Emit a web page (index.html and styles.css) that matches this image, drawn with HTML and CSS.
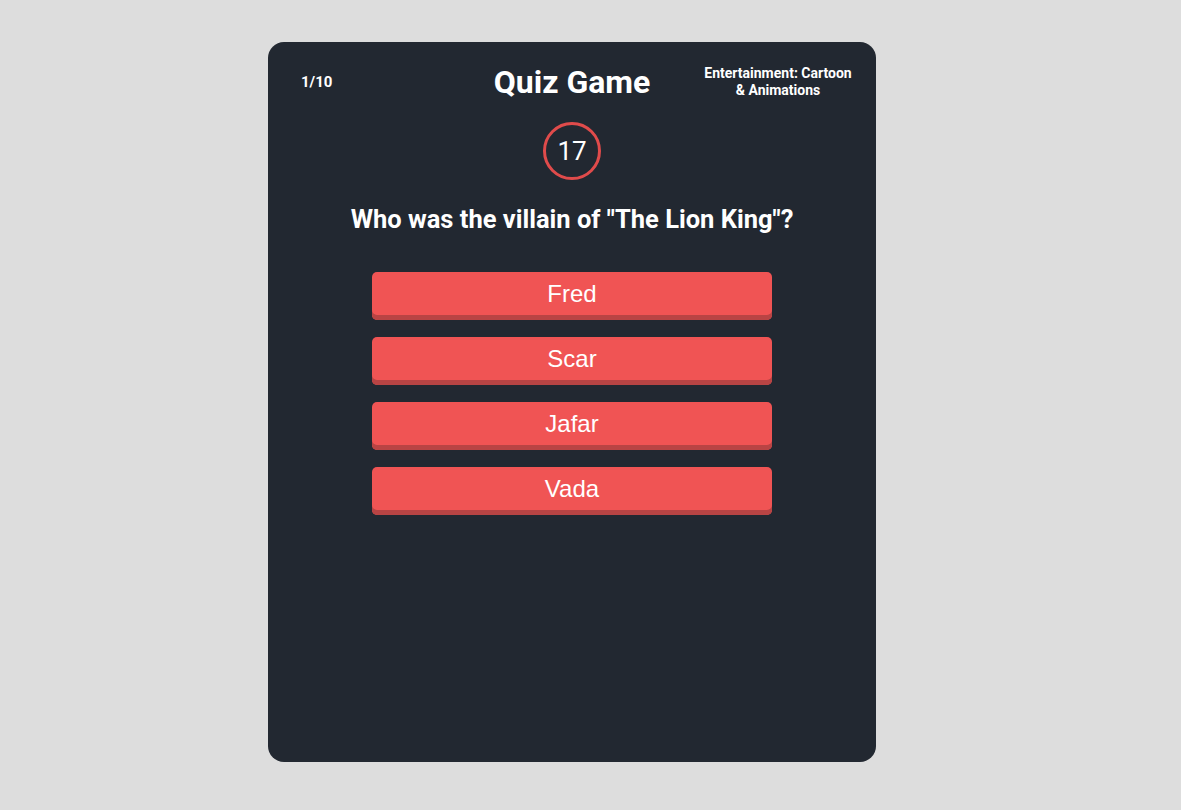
FILE: index.html
```html
<!DOCTYPE html>
<html>
<head>
<meta charset="utf-8">
<link rel="stylesheet" href="styles.css">
</head>
<body>
<main class="card">
  <header class="header">
    <div class="progress">1/10</div>
    <h1 class="title">Quiz Game</h1>
    <div class="category">Entertainment: Cartoon &amp; Animations</div>
  </header>
  <div class="timer">17</div>
  <h2 class="question">Who was the villain of "The Lion King"?</h2>
  <div class="answers">
    <button class="answer">Fred</button>
    <button class="answer">Scar</button>
    <button class="answer">Jafar</button>
    <button class="answer">Vada</button>
  </div>
</main>
</body>
</html>
```
FILE: styles.css
```css
html, body {
  margin: 0;
  padding: 0;
}
body {
  background: #dddddd;
  font-family: Roboto, "Liberation Sans", sans-serif;
  color: #ffffff;
  min-height: 810px;
  display: flex;
  justify-content: flex-start;
  align-items: flex-start;
}
.card {
  box-sizing: border-box;
  width: 608px;
  height: 720px;
  margin-top: 42px;
  margin-left: 268px;
  background: #222831;
  border-radius: 16px;
  display: flex;
  flex-direction: column;
  align-items: center;
  padding-top: 21px;
}
.header {
  width: 100%;
  box-sizing: border-box;
  display: grid;
  grid-template-columns: 1fr auto 1fr;
  align-items: center;
  padding: 0 20px;
}
.progress {
  font-weight: 700;
  font-size: 15px;
  justify-self: start;
  margin-left: 13px;
  margin-top: 0;
}
.title {
  margin: 0;
  font-size: 32px;
  font-weight: 700;
  line-height: 38px;
}
.category {
  justify-self: end;
  width: 156px;
  text-align: center;
  font-weight: 700;
  font-size: 14px;
  line-height: 17px;
  margin-top: 0;
}
.timer {
  box-sizing: border-box;
  width: 58px;
  height: 58px;
  border: 3px solid #e04b4b;
  border-radius: 50%;
  display: flex;
  align-items: center;
  justify-content: center;
  font-size: 26px;
  margin-top: 21px;
}
.question {
  margin: 23px 0 0;
  font-size: 25.5px;
  font-weight: 700;
  line-height: 32px;
}
.answers {
  margin-top: 37px;
  display: flex;
  flex-direction: column;
  gap: 17px;
}
.answer {
  width: 400px;
  height: 48px;
  border: none;
  border-radius: 5px;
  background: #f05454;
  box-shadow: inset 0 -5px 0 #b84444;
  color: #ffffff;
  font-family: "Liberation Sans", Arial, sans-serif;
  font-size: 24px;
  padding: 0 0 4px;
  cursor: pointer;
}
```
